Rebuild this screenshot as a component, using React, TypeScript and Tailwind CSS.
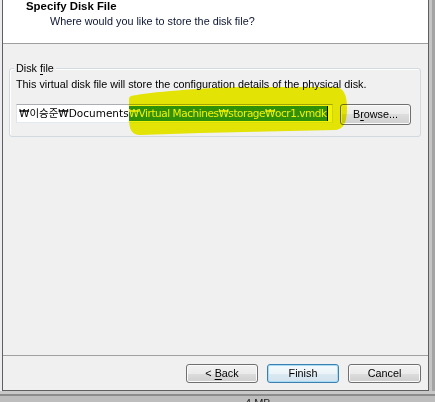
import React from "react";

function Btn({
  children,
  w,
  h,
  def,
}: {
  children: React.ReactNode;
  w: string;
  h: string;
  def?: boolean;
}) {
  return (
    <div
      className={
        "flex items-center justify-center rounded-[3px] border text-black " +
        w +
        " " +
        h +
        " " +
        (def
          ? "border-[#3c7fb1] shadow-[inset_0_0_0_1px_#a8dcf5] bg-[linear-gradient(to_bottom,#f4f9fc_0%,#ecf4f9_50%,#dce9f2_50%,#d2e2ee_100%)]"
          : "border-[#707070] shadow-[inset_0_0_0_1px_#fbfbfb] bg-[linear-gradient(to_bottom,#f2f2f2_0%,#ebebeb_50%,#dddddd_50%,#cfcfcf_100%)]")
      }
    >
      <span className="leading-[13px]">{children}</span>
    </div>
  );
}

export default function App() {
  return (
    <div className="relative flex h-[402px] w-[435px] flex-col overflow-hidden bg-[#b5b5b5] font-['Liberation_Sans',Arial,sans-serif] text-[10.8px] text-black">
      <div className="flex h-[391px] shrink-0">
        <div className="w-[2px] bg-[#ececf0]" />
        <div className="flex h-[391px] w-[427px] flex-col border-b border-l border-r border-[#5f5f5f] bg-[#f0f0f0]">
          {/* header */}
          <div className="h-[44px] shrink-0 border-b border-[#a0a0a0] bg-white">
            <div className="pl-[23px] text-[11.4px] font-bold leading-[13px] text-black">
              Specify Disk File
            </div>
            <div className="mt-[2px] pl-[47px] leading-[13px] text-[#0c1533]">
              Where would you like to store the disk file?
            </div>
          </div>

          {/* body */}
          <div className="h-[311px] shrink-0">
            <div className="relative ml-[6px] mt-[24px] h-[69px] w-[412px] rounded-[3px] border border-[#d2d9df] shadow-[inset_1px_1px_0_#ffffff]">
              <span className="absolute left-[4px] top-[-7px] bg-[#f0f0f0] px-[2px] leading-[13px]">
                Disk <span className="underline underline-offset-2">f</span>ile
              </span>
              <div className="pl-[6px] pt-[9px] leading-[13px]">
                This virtual disk file will store the configuration details of the physical disk.
              </div>
              <div className="mt-[13px] flex items-start pl-[6px]">
                <div className="flex h-[19px] w-[317px] items-center overflow-hidden border border-[#abadb3] border-b-[#e3e9ef] border-l-[#e2e3ea] border-r-[#dbdfe6] bg-white pl-[2px] font-['DejaVu_Sans','Noto_Sans_CJK_KR',sans-serif] text-[10.5px] whitespace-nowrap">
                  <span className="leading-[15px]">₩이승준₩Documents</span>
                  <span className="bg-[#3399ff] leading-[15px] tracking-[-0.45px] text-white">
                    ₩Virtual Machines₩storage₩ocr1.vmdk
                  </span>
                  <span className="h-[15px] w-px shrink-0 bg-black" />
                </div>
                <div className="ml-[7px]">
                  <Btn w="w-[71px]" h="h-[21px]">
                    B<span className="underline underline-offset-2">r</span>owse...
                  </Btn>
                </div>
              </div>
            </div>
          </div>

          {/* footer */}
          <div className="flex h-[35px] shrink-0 justify-end gap-[9px] border-t border-[#a0a0a0] pr-[7px] pt-[8px]">
            <Btn w="w-[72px]" h="h-[19px]">
              &lt; <span className="underline underline-offset-2">B</span>ack
            </Btn>
            <Btn w="w-[72px]" h="h-[19px]" def>
              Finish
            </Btn>
            <Btn w="w-[73px]" h="h-[19px]">
              Cancel
            </Btn>
          </div>
        </div>
        <div className="flex w-[6px]">
          <div className="w-[3px] bg-[#c4c4c4]" />
          <div className="w-[3px] bg-[#a4a4a4]" />
        </div>
      </div>

      {/* area under the window */}
      <div className="flex h-[11px] flex-col">
        <div className="h-[3px] bg-[#c8c8c8]" />
        <div className="h-[2px] bg-[#8c8c8c]" />
        <div className="flex-1 overflow-hidden bg-[#bdbdbd] pl-[245px]">
          <span className="relative top-[1px] block text-[11px] leading-[13px] text-[#202020]">
            4 MB
          </span>
        </div>
      </div>

      {/* highlighter mark */}
      <svg
        className="pointer-events-none absolute left-0 top-0 mix-blend-multiply"
        width="435"
        height="402"
        viewBox="0 0 435 402"
      >
        <path
          d="M131,96 C150,92 200,88 240,87 L334,87 C344,87 347,95 347,108 C347,122 344,130 334,130 L200,133 L140,135 C132,135 129,130 129,118 L129,102 C129,98 129,97 131,96 Z"
          fill="#f2f206"
        />
      </svg>
    </div>
  );
}
